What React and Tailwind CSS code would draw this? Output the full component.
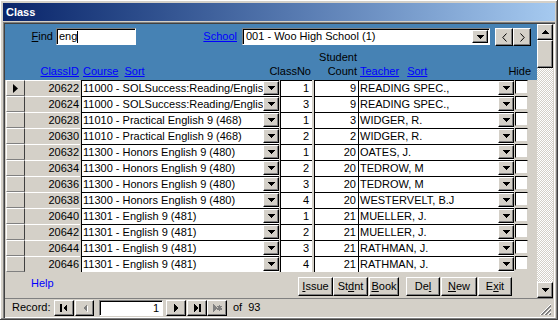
import React from "react";

const raised =
  "bg-[#d4d0c8] border border-t-white border-l-white border-r-black border-b-black shadow-[inset_-1px_-1px_0_#808080]";
const sunken =
  "border border-t-[#808080] border-l-[#808080] border-b-white border-r-white shadow-[inset_1px_1px_0_#000000]";
const field =
  "h-full bg-white border-t border-l border-t-black border-l-black leading-[15px] overflow-hidden whitespace-nowrap";

const rows = [
  [20622, "11000 - SOLSuccess:Reading/English", 1, 9, "READING SPEC.,"],
  [20624, "11000 - SOLSuccess:Reading/English", 3, 9, "READING SPEC.,"],
  [20628, "11010 - Practical English 9 (468)", 1, 3, "WIDGER, R."],
  [20630, "11010 - Practical English 9 (468)", 2, 2, "WIDGER, R."],
  [20632, "11300 - Honors English 9 (480)", 1, 20, "OATES, J."],
  [20634, "11300 - Honors English 9 (480)", 2, 20, "TEDROW, M"],
  [20636, "11300 - Honors English 9 (480)", 3, 20, "TEDROW, M"],
  [20638, "11300 - Honors English 9 (480)", 4, 20, "WESTERVELT, B.J"],
  [20640, "11301 - English 9 (481)", 1, 21, "MUELLER, J."],
  [20642, "11301 - English 9 (481)", 2, 21, "MUELLER, J."],
  [20644, "11301 - English 9 (481)", 3, 21, "RATHMAN, J."],
  [20646, "11301 - English 9 (481)", 4, 21, "RATHMAN, J."],
];

function DownArrow({ color = "#000" }) {
  return (
    <svg width="7" height="4" viewBox="0 0 7 4" shapeRendering="crispEdges">
      <path d="M0 0h7v1h-1v1h-1v1h-1v1h-1v-1h-1v-1h-1v-1h-1z" fill={color} />
    </svg>
  );
}

function UpArrow() {
  return (
    <svg width="7" height="4" viewBox="0 0 7 4" shapeRendering="crispEdges">
      <path d="M3 0h1v1h1v1h1v1h1v1h-7v-1h1v-1h1v-1h1z" fill="#000" />
    </svg>
  );
}

function DropBtn({ h = "h-[14px]" }) {
  return (
    <div className={`w-[16px] ${h} shrink-0 flex items-center justify-center ${raised}`}>
      <DownArrow />
    </div>
  );
}

function Combo({ className, text }) {
  return (
    <div className={`${field} ${className} flex items-start`}>
      <span className="flex-1 overflow-hidden pl-[1px]">{text}</span>
      <DropBtn />
    </div>
  );
}

function NavIcon({ kind, disabled }) {
  const c = disabled ? "#808080" : "#000";
  return (
    <svg width="10" height="8" viewBox="0 0 10 8" shapeRendering="crispEdges">
      {kind === "first" && (
        <>
          <rect x="1" y="0" width="2" height="8" fill={c} />
          <path d="M8 0v8L4 4z" fill={c} />
        </>
      )}
      {kind === "prev" && (
        <>
          {disabled && <path d="M8 1v8L4 5z" fill="#fff" />}
          <path d="M7 0v8L3 4z" fill={c} />
        </>
      )}
      {kind === "next" && <path d="M3 0v8l4-4z" fill={c} />}
      {kind === "last" && (
        <>
          <path d="M2 0v8l4-4z" fill={c} />
          <rect x="7" y="0" width="2" height="8" fill={c} />
        </>
      )}
      {kind === "new" && (
        <>
          <path d="M1 0v8l4-4z" fill={c} />
          <path d="M7.5 1v6M5 4h5M5.5 2l4 4M9.5 2l-4 4" stroke={c} strokeWidth="1" />
        </>
      )}
    </svg>
  );
}

function Row({ r, first }) {
  const [id, course, no, count, teacher] = r;
  return (
    <div className="flex h-[16px] pl-[1px]">
      <div className="w-[19px] h-full flex items-center pl-[6px] bg-[#d4d0c8] border border-t-white border-l-white border-r-[#404040] border-b-[#808080]">
        {first && (
          <svg width="5" height="9" viewBox="0 0 5 9">
            <path d="M0 0L5 4.5L0 9z" fill="#000" />
          </svg>
        )}
      </div>
      <div className="w-[55px] h-full bg-[#d4d0c8] border-t border-t-white text-right pr-[1px] leading-[15px]">
        {id}
      </div>
      <Combo className="ml-[1px] w-[198px]" text={course} />
      <div className={`${field} ml-[1px] w-[32px] text-right pr-[3px]`}>{no}</div>
      <div className={`${field} ml-[2px] w-[44px] text-right pr-[2px]`}>{count}</div>
      <Combo className="w-[156px]" text={teacher} />
      <div className="ml-[1px] w-[18px] h-full flex items-start">
        <div className="w-[13px] h-[14px] bg-white border border-t-black border-l-black border-b-[#d4d0c8] border-r-[#d4d0c8]" />
      </div>
    </div>
  );
}

function Btn({ className, children }) {
  return (
    <div className={`${raised} ${className} h-[19px] flex items-center justify-center leading-none`}>
      {children}
    </div>
  );
}

export default function App() {
  return (
    <div className="w-[558px] h-[320px] bg-[#d4d0c8] p-[3px] overflow-hidden text-[11px] text-black font-['Liberation_Sans',Arial,sans-serif] shadow-[inset_-1px_-1px_0_#404040,inset_1px_1px_0_#ffffff,inset_-2px_-2px_0_#808080]">
      {/* Title bar */}
      <div className="h-[18px] bg-gradient-to-r from-[#0a246a] to-[#a6caf0] flex items-center pl-[3px]">
        <span className="text-white font-bold text-[11px]">Class</span>
      </div>

      {/* Client area */}
      <div className="mt-[1px] h-[296px] p-[2px] shadow-[inset_1px_1px_0_#808080,inset_2px_2px_0_#404040,inset_-1px_-1px_0_#ffffff]">
        <div className="flex h-[274px]">
          {/* Main form */}
          <div className="w-[532px] flex flex-col">
            {/* Header */}
            <div className="h-[56px] bg-[#4682b4] flex flex-col">
              <div className="flex items-start mt-[4px] h-[18px]">
                <div className="w-[51px] text-right pr-[3px] leading-[17px]">
                  <span className="underline">F</span>ind
                </div>
                <div className={`w-[80px] h-[17px] bg-white ${sunken} flex items-center pl-[2px]`}>
                  eng
                  <span className="w-[1px] h-[12px] bg-black" />
                </div>
                <div className="w-[106px] text-right pr-[5px] leading-[17px]">
                  <span className="underline text-[#0000ff]">School</span>
                </div>
                <div className={`w-[248px] h-[17px] bg-white ${sunken} flex items-center pr-[1px]`}>
                  <span className="flex-1 pl-[3px]">001 - Woo High School (1)</span>
                  <DropBtn h="h-[13px]" />
                </div>
                <div className="ml-[5px] flex">
                  <div className={`w-[18px] h-[18px] flex items-center justify-center ${raised}`}>
                    <svg width="5" height="9" viewBox="0 0 5 9">
                      <path d="M4.5 0.5L0.8 4.5L4.5 8.5" fill="none" stroke="#000" strokeWidth="1" />
                    </svg>
                  </div>
                  <div className={`w-[18px] h-[18px] flex items-center justify-center ${raised}`}>
                    <svg width="5" height="9" viewBox="0 0 5 9">
                      <path d="M0.5 0.5L4.2 4.5L0.5 8.5" fill="none" stroke="#000" strokeWidth="1" />
                    </svg>
                  </div>
                </div>
              </div>
              {/* Column labels */}
              <div className="flex-1 flex items-end pb-[2px] pl-[1px] leading-[14px] whitespace-nowrap">
                <div className="w-[19px]" />
                <div className="w-[55px] text-right pr-[1px]">
                  <span className="underline text-[#0000ff]">ClassID</span>
                </div>
                <div className="ml-[1px] w-[198px] pl-[2px] flex">
                  <span className="underline text-[#0000ff]">Course</span>
                  <span className="underline text-[#0000ff] ml-[6px]">Sort</span>
                </div>
                <div className="ml-[1px] w-[32px] flex justify-end pr-[1px]">ClassNo</div>
                <div className="ml-[2px] w-[44px] text-right pr-[1px]">
                  <div>Student</div>
                  <div>Count</div>
                </div>
                <div className="w-[156px] pl-[2px] flex">
                  <span className="underline text-[#0000ff]">Teacher</span>
                  <span className="underline text-[#0000ff] ml-[8px]">Sort</span>
                </div>
                <div className="ml-[1px] w-[18px] flex justify-end pr-[2px]">Hide</div>
              </div>
            </div>

            {/* Detail rows */}
            <div className="flex flex-col">
              {rows.map((r, i) => (
                <Row key={r[0]} r={r} first={i === 0} />
              ))}
            </div>

            {/* Footer */}
            <div className="flex-1 flex items-start">
              <div className="w-[293px] pl-[26px] mt-[4px] leading-[14px] text-[#0000ff]">Help</div>
              <div className="flex mt-[5px]">
                <Btn className="w-[35px]">
                  <span><span className="underline">I</span>ssue</span>
                </Btn>
                <Btn className="w-[35px]">
                  <span>St<span className="underline">d</span>nt</span>
                </Btn>
                <Btn className="ml-[1px] w-[30px]">
                  <span><span className="underline">B</span>ook</span>
                </Btn>
                <Btn className="ml-[7px] w-[34px]">
                  <span>De<span className="underline">l</span></span>
                </Btn>
                <Btn className="ml-[1px] w-[36px]">
                  <span><span className="underline">N</span>ew</span>
                </Btn>
                <Btn className="ml-[1px] w-[34px]">
                  <span>E<span className="underline">x</span>it</span>
                </Btn>
              </div>
            </div>
          </div>

          {/* Vertical scrollbar */}
          <div className="w-[16px] flex flex-col">
            <div className={`h-[16px] flex items-center justify-center ${raised}`}>
              <UpArrow />
            </div>
            <div className={`h-[28px] ${raised}`} />
            <div className="flex-1 bg-[repeating-conic-gradient(#ffffff_0%_25%,#d4d0c8_0%_50%)] bg-size-[2px_2px]" />
            <div className={`h-[16px] flex items-center justify-center ${raised}`}>
              <DownArrow />
            </div>
          </div>
        </div>

        {/* Record navigator */}
        <div className="h-[18px] flex items-center border-t border-t-[#808080]">
          <div className="w-[49px] pl-[7px]">Record:</div>
          <div className={`w-[20px] h-[16px] flex items-center justify-center ${raised}`}>
            <NavIcon kind="first" />
          </div>
          <div className={`ml-[1px] w-[19px] h-[16px] flex items-center justify-center ${raised}`}>
            <NavIcon kind="prev" disabled />
          </div>
          <div className={`ml-[5px] w-[64px] h-[16px] bg-white ${sunken} text-right pr-[3px] leading-[14px]`}>1</div>
          <div className={`ml-[3px] w-[20px] h-[16px] flex items-center justify-center ${raised}`}>
            <NavIcon kind="next" />
          </div>
          <div className={`ml-[1px] w-[20px] h-[16px] flex items-center justify-center ${raised}`}>
            <NavIcon kind="last" />
          </div>
          <div className={`w-[20px] h-[16px] flex items-center justify-center ${raised}`}>
            <NavIcon kind="new" disabled />
          </div>
          <div className="ml-[6px]">of</div>
          <div className="ml-[6px]">93</div>
          <div className="flex-1" />
          <svg width="13" height="13" viewBox="0 0 13 13" className="mr-[1px] self-end">
            <path d="M12 1L1 12M12 5L5 12M12 9L9 12" stroke="#ffffff" strokeWidth="1" />
            <path d="M12 2L2 12M12 3L3 12M12 6L6 12M12 7L7 12M12 10L10 12M12 11L11 12" stroke="#808080" strokeWidth="1" />
          </svg>
        </div>
      </div>
    </div>
  );
}
